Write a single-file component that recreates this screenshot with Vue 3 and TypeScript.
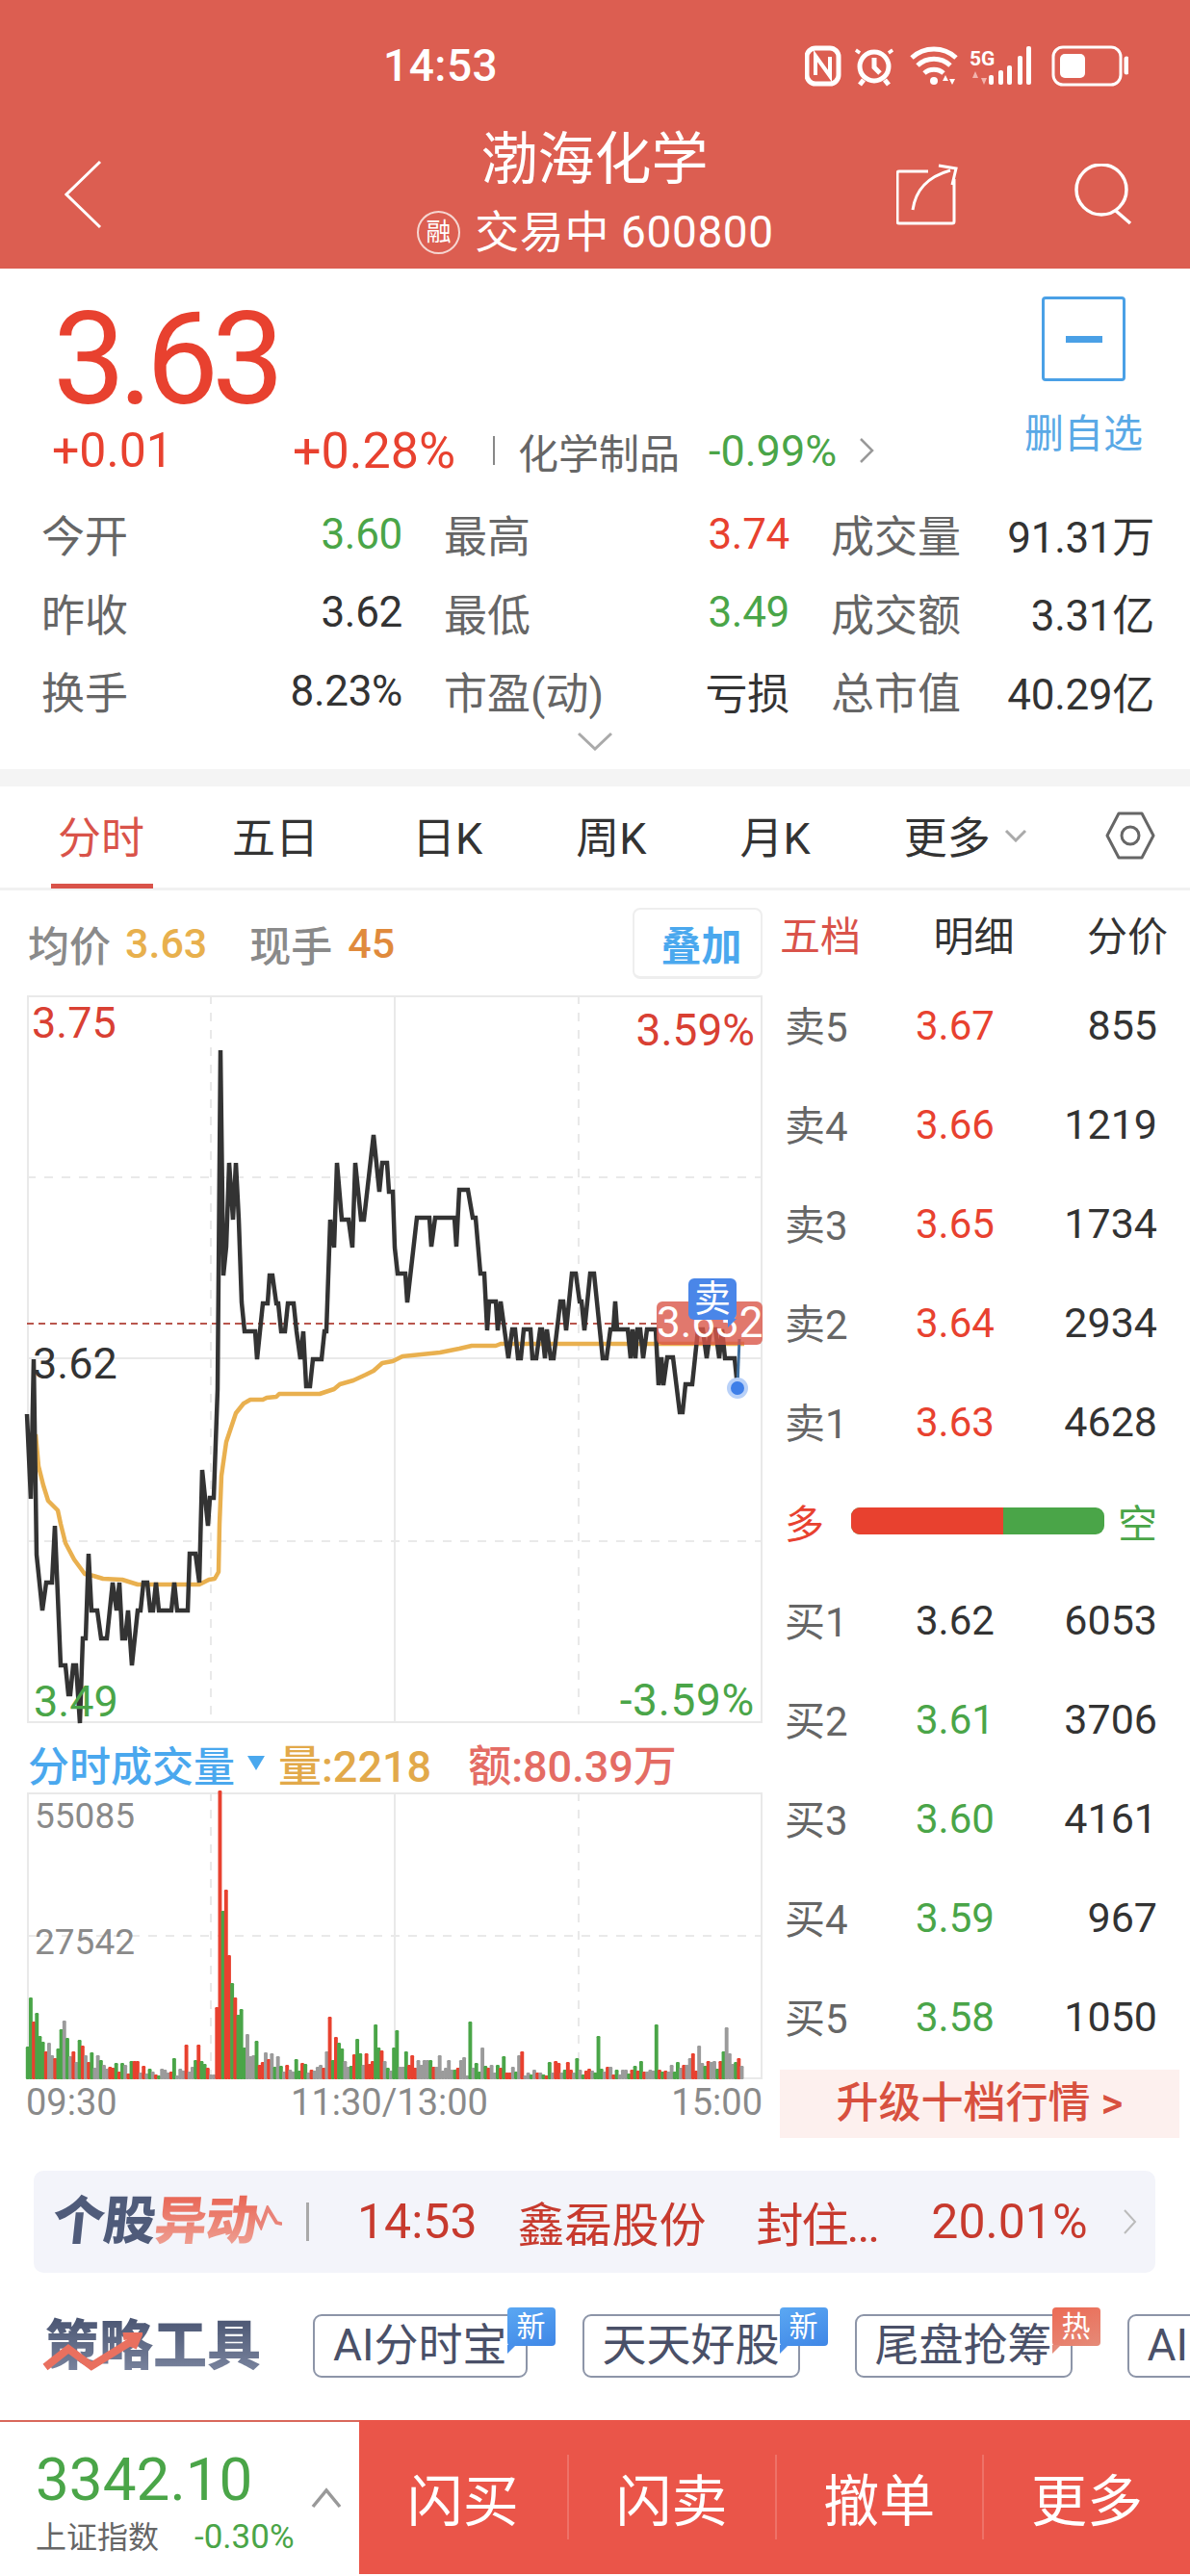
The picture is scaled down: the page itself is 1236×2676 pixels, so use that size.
<script setup lang="ts">
interface BookRow {
  label: string;
  price: string;
  qty: string;
  tone: 'up' | 'down' | 'flat';
}

const stats = [
  { label: '今开', value: '3.60', tone: 'down' },
  { label: '最高', value: '3.74', tone: 'up' },
  { label: '成交量', value: '91.31万', tone: 'flat' },
  { label: '昨收', value: '3.62', tone: 'flat' },
  { label: '最低', value: '3.49', tone: 'down' },
  { label: '成交额', value: '3.31亿', tone: 'flat' },
  { label: '换手', value: '8.23%', tone: 'flat' },
  { label: '市盈(动)', value: '亏损', tone: 'flat' },
  { label: '总市值', value: '40.29亿', tone: 'flat' },
];

const tabs = ['五日', '日K', '周K', '月K'];

const sells: BookRow[] = [
  { label: '卖5', price: '3.67', qty: '855', tone: 'up' },
  { label: '卖4', price: '3.66', qty: '1219', tone: 'up' },
  { label: '卖3', price: '3.65', qty: '1734', tone: 'up' },
  { label: '卖2', price: '3.64', qty: '2934', tone: 'up' },
  { label: '卖1', price: '3.63', qty: '4628', tone: 'up' },
];

const buys: BookRow[] = [
  { label: '买1', price: '3.62', qty: '6053', tone: 'flat' },
  { label: '买2', price: '3.61', qty: '3706', tone: 'down' },
  { label: '买3', price: '3.60', qty: '4161', tone: 'down' },
  { label: '买4', price: '3.59', qty: '967', tone: 'down' },
  { label: '买5', price: '3.58', qty: '1050', tone: 'down' },
];

const chips = [
  { text: 'AI分时宝', badge: '新', hot: false },
  { text: '天天好股', badge: '新', hot: false },
  { text: '尾盘抢筹', badge: '热', hot: true },
  { text: 'AI', badge: '', hot: false },
];

const actions = ['闪买', '闪卖', '撤单', '更多'];

const pricePoints =
  '28,1471 32,1559 35,1414 38,1617 44,1675 48,1646 54,1646 57,1587 63,1732 68,1732 71,1762 73,1762 76,1732 79,1732 83,1792 86,1704 89,1704 92,1616 95,1675 101,1675 105,1704 111,1704 117,1646 121,1675 124,1646 127,1704 130,1704 133,1675 137,1732 143,1675 146,1675 149,1646 153,1646 156,1675 159,1675 162,1646 165,1675 178,1675 181,1646 184,1675 195,1675 197,1616 203,1616 207,1646 210,1529 216,1587 218,1558 222,1558 226,1445 229,1093 232,1327 235,1297 238,1210 242,1269 245,1210 248,1269 251,1355 254,1385 265,1385 267,1414 273,1356 278,1356 280,1327 283,1327 287,1356 289,1356 292,1385 296,1385 299,1356 305,1356 308,1385 312,1414 315,1385 318,1442 322,1442 325,1414 334,1414 337,1385 339,1385 343,1269 347,1298 350,1210 355,1269 362,1269 366,1298 369,1210 375,1269 378,1269 388,1181 394,1240 397,1210 402,1210 404,1240 408,1240 410,1298 413,1325 421,1325 423,1355 433,1267 446,1267 448,1297 452,1267 472,1267 474,1297 477,1238 486,1238 491,1267 494,1267 499,1325 503,1325 506,1384 508,1354 515,1354 517,1384 520,1354 528,1413 532,1383 535,1383 538,1413 541,1413 544,1383 551,1383 553,1413 557,1413 561,1383 563,1383 566,1413 568,1383 572,1413 575,1413 582,1354 585,1354 588,1384 594,1325 598,1325 602,1354 604,1354 607,1384 613,1325 617,1325 626,1413 630,1413 634,1383 637,1383 639,1354 641,1383 652,1383 655,1413 657,1383 660,1413 662,1383 665,1383 668,1413 672,1383 681,1383 684,1441 687,1412 689,1441 693,1412 699,1412 706,1469 709,1469 712,1440 719,1440 725,1383 730,1383 734,1413 738,1383 743,1383 747,1413 750,1383 753,1413 763,1413 766,1443';

const avgPoints =
  '37,1492 40,1525 45,1545 50,1561 60,1571 63,1585 68,1605 77,1622 88,1637 97,1639 107,1642 127,1643 143,1648 207,1648 217,1643 223,1642 227,1635 228,1585 230,1535 235,1500 245,1470 253,1460 260,1456 273,1456 277,1454 287,1453 290,1450 332,1450 347,1445 353,1440 367,1436 380,1430 388,1426 397,1418 408,1416 418,1411 457,1407 477,1403 490,1400 515,1400 520,1398 773,1398';

const volRaw =
  'g34 g85 r60 g69 g45 g39 r29 a38 a25 r22 g32 g52 a61 g43 a24 r29 a18 g41 r35 a25 r18 g28 a12 a25 g20 a15 a11 r13 r12 g17 r8 g17 a15 r6 g19 r19 r19 a7 r14 a6 g11 a8 r5 g4 a11 a10 a7 r8 g22 a4 a11 a9 r36 a8 a13 g20 r36 g19 g16 r12 a5 a5 r75 r300 g175 r197 r129 g100 r85 g67 g73 g33 a47 a24 a25 g40 r15 r18 a28 r21 ' +
  'a27 g13 a24 g14 a8 r15 a10 a8 g21 g9 r17 g16 a7 r10 a9 a13 a15 r12 a29 r65 g20 r44 g38 g32 a19 a13 g14 r26 g42 g27 a15 r27 r16 r19 g57 g33 r30 a19 g12 a9 g33 g51 a13 a13 g29 r15 r25 r12 a20 a15 a20 a20 g20 r13 a13 a25 a9 a12 a20 a10 g10 r12 a20 a23 a4 g60 a12 g17 g8 a33 g14 r12 a15 a7 g15 r12 g24 r7 r7 ' +
  'a13 g8 a25 r29 a4 a7 g5 a10 r7 a7 g5 r4 g18 a7 r19 r17 a7 g10 r18 r10 a7 g22 a10 g5 r9 r11 a9 g7 g45 g11 a8 r13 a13 r5 g10 a5 a10 a10 g6 r10 g14 r9 g19 r8 a8 a10 a9 g57 r10 g8 r9 a8 a15 g8 g18 a12 r15 a15 a22 r27 r9 a35 a17 g14 r19 a18 a19 g11 r19 g29 a54 a27 a16 g18 r22 a14';

const volColor: Record<string, string> = { r: '#e8412f', g: '#4aa548', a: '#9b9b9b' };

const volBars = volRaw.split(' ').map((item, i) => ({
  x: 26.8 + 3.17 * i,
  h: Number(item.slice(1)),
  fill: volColor[item[0]],
}));
</script>

<template>
  <div class="page">
    <header class="head">
      <div class="status">
        <span class="status__time">14:53</span>
        <svg class="status__icons" width="336" height="44" viewBox="836 46 336 44">
          <g fill="none" stroke="#fff" stroke-width="5">
            <rect x="838" y="50" width="33" height="37" rx="9" />
            <path d="M847 78V58l15 21V59" stroke-width="4" />
            <circle cx="908" cy="69" r="15" />
            <path d="M908 60v10l6 6M892 52l-2 3M924 52l2 3M897 83l-4 5M919 83l4 5" />
            <path d="M947 60a34 34 0 0 1 46 0M953 68a25 25 0 0 1 34 0M960 76a15 15 0 0 1 20 0" />
            <rect x="1094" y="49" width="70" height="39" rx="10" stroke-width="3" />
            <path d="M1170 61v14" stroke-linecap="round" />
          </g>
          <circle cx="970" cy="84" r="4" fill="#fff" />
          <path d="M982 78l-3 6h6zM989 88l-3-6h6z" fill="#fff" />
          <text x="1007" y="68" class="status__net">5G</text>
          <path d="M1013 74l-3 7h6zM1022 88l-3-7h6z" fill="#f2b4ad" />
          <g fill="#fff">
            <rect x="1027" y="78" width="5" height="10" rx="2" />
            <rect x="1037" y="73" width="5" height="15" rx="2" />
            <rect x="1046" y="68" width="5" height="20" rx="2" />
            <rect x="1057" y="58" width="5" height="30" rx="2" />
            <rect x="1066" y="48" width="5" height="40" rx="2" />
            <rect x="1101" y="56" width="26" height="25" rx="5" />
          </g>
        </svg>
      </div>
      <div class="nav">
        <svg class="nav__back" width="39" height="74" viewBox="67 165 39 74" fill="none" stroke="#fff" stroke-width="3">
          <path d="M104 168L69 202l35 34" />
        </svg>
        <div class="nav__title">
          <div class="nav__name">渤海化学</div>
          <div class="nav__sub"><span class="nav__seal">融</span>交易中 600800</div>
        </div>
        <div class="nav__actions">
          <svg width="64" height="64" viewBox="933 170 64 64" fill="none" stroke="#fff" stroke-width="3">
            <path d="M966 178h-30a2 2 0 0 0-2 2v50a2 2 0 0 0 2 2h55a2 2 0 0 0 2-2v-44" />
            <path d="M950 218c3-20 14-34 39-41M977 172l18 3-4 17" />
          </svg>
          <svg width="62" height="64" viewBox="1116 170 62 64" fill="none" stroke="#fff" stroke-width="3.5">
            <circle cx="1146" cy="197" r="26" />
            <path d="M1161 219l15 13" />
          </svg>
        </div>
      </div>
    </header>

    <section class="quote">
      <div class="quote__main">
        <div class="quote__price">3.63</div>
        <div class="quote__change">
          <span class="quote__delta">+0.01</span>
          <span class="quote__pct">+0.28%</span>
          <span class="quote__bar"></span>
          <span class="quote__sector">化学制品</span>
          <span class="quote__sector-pct">-0.99%</span>
          <svg width="16" height="28" viewBox="0 0 16 28" fill="none" stroke="#999" stroke-width="2.5">
            <path d="M2 2l12 12L2 26" />
          </svg>
        </div>
      </div>
      <div class="quote__fav">
        <div class="quote__fav-box"><i></i></div>
        <div class="quote__fav-text">删自选</div>
      </div>
    </section>

    <section class="stats">
      <div v-for="s in stats" :key="s.label" class="stats__cell">
        <span class="stats__label">{{ s.label }}</span>
        <span :class="['stats__value', `tone-${s.tone}`]">{{ s.value }}</span>
      </div>
    </section>
    <div class="expand">
      <svg width="36" height="20" viewBox="0 0 36 20" fill="none" stroke="#aaa" stroke-width="3">
        <path d="M1 2l17 16L35 2" />
      </svg>
    </div>

    <div class="band"></div>

    <nav class="tabs">
      <div class="tabs__active">分时</div>
      <div v-for="t in tabs" :key="t" class="tabs__item">{{ t }}</div>
      <div class="tabs__item tabs__more">
        更多
        <svg width="24" height="14" viewBox="0 0 24 14" fill="none" stroke="#aaa" stroke-width="3">
          <path d="M2 2l10 10L22 2" />
        </svg>
      </div>
      <svg class="tabs__gear" width="52" height="50" viewBox="0 0 52 50" fill="none" stroke="#666" stroke-width="3">
        <path d="M14 2h24l12 23-12 23H14L2 25z" stroke-linejoin="round" />
        <circle cx="26" cy="25" r="9" />
      </svg>
    </nav>

    <main class="main">
      <div class="left">
        <div class="info">
          <span class="info__label">均价</span>
          <span class="info__avg">3.63</span>
          <span class="info__label info__label--now">现手</span>
          <span class="info__now">45</span>
          <button class="info__btn">叠加</button>
        </div>

        <div class="chart">
          <svg class="chart__svg" width="764" height="756" viewBox="28 1036 764 756">
            <g fill="none" stroke="#e9e9e9" stroke-width="2">
              <rect x="29" y="1037" width="762" height="754" />
              <path d="M410 1036v756M28 1413h764" />
              <path d="M28 1225h764M28 1603h764M219 1036v756M601 1036v756" stroke-dasharray="9 9" />
            </g>
            <path d="M28 1377h654" fill="none" stroke="#b9564d" stroke-width="2" stroke-dasharray="7 5" />
            <polyline :points="avgPoints" fill="none" stroke="#e9b04f" stroke-width="4.5" stroke-linejoin="round" />
            <polyline :points="pricePoints" fill="none" stroke="#333" stroke-width="4.5" stroke-linejoin="miter" />
            <path d="M766 1443l2-50" stroke="#3f6f9f" stroke-width="3" />
            <circle cx="766" cy="1444" r="11" fill="#b9d1f8" />
            <circle cx="766" cy="1444" r="7" fill="#3f7fe8" />
          </svg>
          <span class="chart__tag chart__tag--hi">3.75</span>
          <span class="chart__tag chart__tag--hi-pct">3.59%</span>
          <span class="chart__tag chart__tag--mid">3.62</span>
          <span class="chart__tag chart__tag--lo">3.49</span>
          <span class="chart__tag chart__tag--lo-pct">-3.59%</span>
          <div class="chart__last">3.632</div>
          <div class="chart__sell">卖</div>
        </div>

        <div class="vol-head">
          <span class="vol-head__name">分时成交量</span>
          <i class="vol-head__arrow"></i>
          <span class="vol-head__qty">量:2218</span>
          <span class="vol-head__amt">额:80.39万</span>
        </div>

        <div class="vol">
          <svg class="vol__svg" width="764" height="298" viewBox="28 1864 764 298">
            <g fill="none" stroke="#e9e9e9" stroke-width="2">
              <rect x="29" y="1865" width="762" height="296" />
              <path d="M410 1864v298" />
              <path d="M28 2013h764M219 1864v298M601 1864v298" stroke-dasharray="9 9" />
            </g>
            <rect
              v-for="(b, i) in volBars"
              :key="i"
              :x="b.x"
              :y="2162 - b.h"
              width="3.9"
              :height="b.h"
              rx="1.2"
              :fill="b.fill"
            />
          </svg>
          <span class="vol__tag vol__tag--top">55085</span>
          <span class="vol__tag vol__tag--mid">27542</span>
        </div>

        <div class="times">
          <span>09:30</span>
          <span class="times__mid">11:30/13:00</span>
          <span>15:00</span>
        </div>
      </div>

      <aside class="book">
        <div class="book__tabs">
          <span class="book__tab--on">五档</span>
          <span>明细</span>
          <span>分价</span>
        </div>
        <div v-for="r in sells" :key="r.label" class="book__row">
          <span class="book__label">{{ r.label }}</span>
          <span :class="`tone-${r.tone}`">{{ r.price }}</span>
          <span class="book__qty">{{ r.qty }}</span>
        </div>
        <div class="book__ratio">
          <span class="tone-up">多</span>
          <div class="book__bar"><i></i></div>
          <span class="tone-down book__short">空</span>
        </div>
        <div v-for="r in buys" :key="r.label" class="book__row">
          <span class="book__label">{{ r.label }}</span>
          <span :class="`tone-${r.tone}`">{{ r.price }}</span>
          <span class="book__qty">{{ r.qty }}</span>
        </div>
        <div class="book__upgrade">升级十档行情 &gt;</div>
      </aside>
    </main>

    <section class="alert">
      <div class="alert__logo"><b>个股</b><em>异动</em></div>
      <svg class="alert__wave" width="30" height="26" viewBox="0 0 26 26" fill="none" stroke="#e98378" stroke-width="3.5" stroke-linecap="round" preserveAspectRatio="none">
        <path d="M1 8l6 14L13 3l8 15 4 1" />
      </svg>
      <span class="alert__sep"></span>
      <span class="alert__time">14:53</span>
      <span class="alert__name">鑫磊股份</span>
      <span class="alert__event">封住...</span>
      <span class="alert__pct">20.01%</span>
      <svg class="alert__more" width="15" height="26" viewBox="0 0 15 26" fill="none" stroke="#bbb" stroke-width="2">
        <path d="M2 1l11 12L2 25" />
      </svg>
    </section>

    <section class="tools">
      <div class="tools__logo">
        策略工具
        <svg class="tools__arrow" width="104" height="44" viewBox="44 2428 104 44" fill="none" stroke="#e9705f" stroke-width="8">
          <path d="M47 2464l24-19 24 18 45-28" />
          <path d="M128 2432l16-2-6 14" />
        </svg>
      </div>
      <div class="tools__chips">
        <div v-for="c in chips" :key="c.text" class="chip">
          {{ c.text }}
          <span v-if="c.badge" :class="['chip__badge', { 'chip__badge--hot': c.hot }]">{{ c.badge }}</span>
        </div>
      </div>
    </section>

    <footer class="foot">
      <div class="index">
        <div>
          <div class="index__value">3342.10</div>
          <div class="index__sub"><span>上证指数</span><span class="index__pct">-0.30%</span></div>
        </div>
        <svg class="index__up" width="32" height="22" viewBox="0 0 32 22" fill="none" stroke="#999" stroke-width="3.5">
          <path d="M2 20L16 3l14 17" />
        </svg>
      </div>
      <div class="trade">
        <div v-for="a in actions" :key="a" class="trade__btn"><span>{{ a }}</span></div>
      </div>
    </footer>
  </div>
</template>

<style scoped>
.page {
  width: 1236px;
  height: 2676px;
  overflow: hidden;
  background: #fff;
  color: #333;
  font-family: Roboto, "Noto Sans CJK SC", sans-serif;
}

.tone-up { color: #e8412f; }
.tone-down { color: #4aa548; }
.tone-flat { color: #333; }

.head {
  height: 279px;
  background: #dc5e51;
  color: #fff;
}

.status {
  height: 122px;
  padding: 46px 64px 0 398px;
  box-sizing: border-box;
  display: flex;
  justify-content: space-between;
  align-items: flex-start;
}

.status__time {
  font-size: 46px;
  line-height: 44px;
  font-weight: 500;
  letter-spacing: 0.5px;
}

.status__net {
  font-size: 21px;
  font-weight: 700;
  fill: #fff;
  font-family: Roboto, sans-serif;
}

.nav {
  display: grid;
  grid-template-columns: 1fr auto 1fr;
  align-items: start;
  padding: 0 60px 0 67px;
}

.nav__back { margin-top: 43px; }

.nav__title { text-align: center; }

.nav__name {
  font-size: 59px;
  line-height: 70px;
  margin-top: 9px;
  margin-right: 8px;
}

.nav__sub {
  display: flex;
  align-items: center;
  justify-content: center;
  font-size: 46px;
  letter-spacing: 0.6px;
  line-height: 60px;
  margin-top: 10px;
  padding-right: 6px;
}

.nav__seal {
  width: 41px;
  height: 41px;
  border: 2px solid #f6d5d0;
  border-radius: 50%;
  font-size: 26px;
  line-height: 41px;
  text-align: center;
  margin-right: 15px;
}

.nav__actions {
  display: flex;
  justify-content: flex-end;
  gap: 119px;
  margin-top: 48px;
}

.quote {
  height: 232px;
  display: flex;
  justify-content: space-between;
  padding: 0 49px 0 54px;
}

.quote__main { flex: 1; }

.quote__price {
  font-size: 134px;
  line-height: 134px;
  margin-top: 28px;
  margin-left: 1px;
  letter-spacing: -7px;
  color: #e8412f;
  font-weight: 400;
}

.quote__change {
  display: flex;
  align-items: center;
  height: 56px;
  margin-top: -1px;
}

.quote__delta { font-size: 50px; width: 250px; color: #e8412f; }
.quote__pct { font-size: 52px; color: #e8412f; width: 208px; }

.quote__bar {
  width: 2px;
  height: 30px;
  background: #888;
  margin-right: 24px;
}

.quote__sector { font-size: 42px; color: #666; width: 198px; }
.quote__sector-pct { font-size: 45px; color: #4aa548; width: 156px; }

.quote__fav {
  display: flex;
  flex-direction: column;
  align-items: center;
  padding-top: 29px;
}

.quote__fav-box {
  width: 87px;
  height: 88px;
  box-sizing: border-box;
  border: 3px solid #4aa0e6;
  border-radius: 4px;
  display: grid;
  place-items: center;
}

.quote__fav-box i {
  display: block;
  width: 38px;
  height: 7px;
  background: #4aa0e6;
}

.quote__fav-text {
  font-size: 41px;
  line-height: 50px;
  margin-top: 30px;
  color: #5aa9e6;
}

.stats {
  display: grid;
  grid-template-columns: 375px 359px 336px;
  column-gap: 43px;
  padding-left: 43px;
  margin-top: 3px;
}

.stats__cell {
  height: 81.5px;
  display: flex;
  align-items: center;
  justify-content: space-between;
  font-size: 44px;
}

.stats__label { color: #666; font-size: 45px; }
.stats__value { letter-spacing: -0.3px; }

.expand {
  display: flex;
  justify-content: center;
  height: 39px;
  margin-top: 1px;
}

.band {
  height: 18px;
  background: #f4f4f4;
}

.tabs {
  height: 108px;
  box-sizing: border-box;
  padding: 0 36px 3px 60px;
  border-bottom: 3px solid #f1f1f1;
  display: flex;
  align-items: center;
  font-size: 45px;
  color: #333;
  position: relative;
}

.tabs__active {
  color: #d9534a;
  position: relative;
  margin-right: 91px;
}

.tabs__active::after {
  content: "";
  position: absolute;
  left: -7px;
  right: -9px;
  bottom: -23px;
  height: 5px;
  background: #d9534a;
}

.tabs__item { margin-right: 97px; }

.tabs__more {
  display: flex;
  align-items: center;
  gap: 14px;
  margin-right: 0;
}

.tabs__gear { margin-left: auto; }

.main {
  display: grid;
  grid-template-columns: 800px 436px;
  height: 1296px;
}

.info {
  height: 109px;
  padding: 18px 8px 17px 29px;
  box-sizing: border-box;
  display: flex;
  align-items: center;
  font-size: 43px;
  font-weight: 500;
}

.info__label { color: #8a8a8a; }
.info__label--now { margin-left: 44px; }
.info__avg { color: #e8b04d; margin-left: 15px; }
.info__now { color: #e08a3c; margin-left: 16px; }

.info__btn {
  margin-left: auto;
  width: 135px;
  height: 74px;
  box-sizing: border-box;
  padding: 0 0 0 8px;
  background: #fff;
  border: 2px solid #eee;
  border-bottom-width: 3px;
  border-radius: 8px;
  color: #4aa8ee;
  font: inherit;
  font-weight: 700;
  font-size: 42px;
}

.chart {
  position: relative;
  margin-left: 28px;
  width: 764px;
  height: 756px;
}

.chart__svg,
.vol__svg {
  display: block;
  overflow: visible;
}

.chart__tag {
  position: absolute;
  font-size: 45px;
  line-height: 44px;
}

.chart__tag--hi { left: 5px; top: 7px; color: #d94033; }
.chart__tag--hi-pct { right: 8px; top: 14px; color: #d94033; font-size: 46px; }
.chart__tag--mid { left: 6px; top: 361px; color: #333; }
.chart__tag--lo { left: 7px; top: 712px; color: #4aa548; }
.chart__tag--lo-pct { right: 8px; top: 710px; color: #4aa548; font-size: 46px; letter-spacing: 0.7px; }

.chart__last {
  position: absolute;
  left: 654px;
  top: 318px;
  width: 110px;
  height: 45px;
  border-radius: 6px;
  background: rgba(217, 86, 72, 0.8);
  color: #fff;
  font-size: 44px;
  line-height: 45px;
  text-align: center;
}

.chart__sell {
  position: absolute;
  left: 687px;
  top: 294px;
  width: 50px;
  height: 43px;
  border-radius: 6px;
  background: #4a86e8;
  color: #fff;
  font-size: 38px;
  line-height: 43px;
  text-align: center;
}

.chart__sell::after {
  content: "";
  position: absolute;
  right: 0;
  top: 42px;
  border-style: solid;
  border-width: 0 0 9px 9px;
  border-color: transparent transparent transparent #4a86e8;
}

.vol-head {
  height: 72px;
  display: flex;
  align-items: center;
  padding: 12px 0 0 29px;
  box-sizing: border-box;
  font-size: 43px;
}

.vol-head__name { color: #4aa8ee; font-weight: 500; }

.vol-head__arrow {
  margin-left: 13px;
  border-style: solid;
  border-width: 15px 9px 0;
  border-color: #4aa8ee transparent transparent;
}

.vol-head__qty { color: #e2a94a; margin-left: 14px; font-weight: 500; font-size: 45px; }
.vol-head__amt { color: #e46c64; margin-left: 38px; font-weight: 500; font-size: 45px; }

.vol {
  position: relative;
  margin-left: 28px;
  width: 764px;
  height: 298px;
}

.vol__tag {
  position: absolute;
  left: 8px;
  font-size: 37px;
  line-height: 40px;
  color: #8a8a8a;
}

.vol__tag--top { top: 5px; }
.vol__tag--mid { top: 136px; }

.times {
  margin: 3px 8px 0 27px;
  display: flex;
  justify-content: space-between;
  font-size: 38px;
  line-height: 42px;
  color: #8a8a8a;
}

.times__mid { margin-right: 10px; }

.book {
  font-size: 42px;
}

.book__tabs {
  height: 89px;
  display: flex;
  justify-content: space-between;
  align-items: center;
  padding: 0 23px 0 10px;
  box-sizing: border-box;
  color: #333;
}

.book__tab--on { color: #d9534a; }

.book__row {
  height: 103px;
  display: grid;
  grid-template-columns: 136px 82px 1fr;
  align-items: center;
  padding: 0 34px 0 15px;
}

.book__label { color: #666; margin-top: -3px; }
.book__qty { text-align: right; color: #333; font-size: 43px; }

.book__ratio {
  height: 103px;
  display: flex;
  align-items: center;
  padding: 0 34px 0 15px;
  font-size: 41px;
}

.book__bar {
  width: 263px;
  height: 28px;
  margin-left: 28px;
  border-radius: 9px;
  background: #4aa548;
  overflow: hidden;
}

.book__bar i {
  display: block;
  width: 60%;
  height: 100%;
  background: #e8412f;
}

.book__short { margin-left: auto; }

.book__upgrade {
  height: 71px;
  margin: 3px 11px 0 10px;
  background: #fdf0ee;
  color: #d8503f;
  font-size: 44px;
  font-weight: 500;
  line-height: 71px;
  text-align: center;
}

.alert {
  position: relative;
  height: 106px;
  margin: 34px 36px 0 35px;
  background: #f3f4fa;
  border-radius: 10px;
  display: flex;
  align-items: center;
  color: #c73a2e;
  font-size: 49px;
  white-space: nowrap;
}

.alert__logo {
  margin-left: 20px;
  font-size: 54px;
  line-height: 56px;
  font-weight: 900;
  letter-spacing: -1px;
  transform: skewX(-6deg);
}

.alert__logo b {
  color: #4f5b7a;
}

.alert__logo em {
  font-style: normal;
  background: linear-gradient(#e8604f, #efa69a);
  -webkit-background-clip: text;
  background-clip: text;
  color: transparent;
}

.alert__wave { margin-left: -4px; margin-top: -8px; }

.alert__sep {
  width: 3px;
  height: 40px;
  background: #a9a9a9;
  margin-left: 25px;
}

.alert__time { margin-left: 50px; font-size: 50px; }
.alert__name { margin-left: 42px; }
.alert__event { margin-left: 52px; letter-spacing: -2px; }
.alert__pct { margin-left: 55px; font-size: 50px; }
.alert__more { position: absolute; right: 19px; top: 40px; }

.tools {
  display: flex;
  align-items: center;
  height: 153px;
  overflow: hidden;
}

.tools__logo {
  position: relative;
  flex-shrink: 0;
  margin-left: 47px;
  font-size: 56px;
  font-weight: 900;
  line-height: 60px;
  white-space: nowrap;
  color: transparent;
  background: linear-gradient(#4a5572, #7c86a0);
  -webkit-background-clip: text;
  background-clip: text;
}

.tools__arrow {
  position: absolute;
  left: -3px;
  top: 16px;
}

.tools__chips {
  display: flex;
  gap: 57px;
  margin-left: 54px;
}

.chip {
  position: relative;
  flex-shrink: 0;
  height: 66px;
  box-sizing: border-box;
  padding: 0 19px;
  border: 2.5px solid #8d95a8;
  border-radius: 9px;
  color: #4a5068;
  font-size: 46px;
  line-height: 60px;
  white-space: nowrap;
}

.chip:last-child { width: 220px; }

.chip__badge {
  position: absolute;
  right: -31px;
  top: -9px;
  width: 50px;
  height: 40px;
  border-radius: 4px;
  background: linear-gradient(160deg, #5ba8f3, #3f86e6);
  color: #fff;
  font-size: 30px;
  line-height: 40px;
  text-align: center;
}

.chip__badge::after {
  content: "";
  position: absolute;
  left: 0;
  top: 39px;
  border-style: solid;
  border-width: 9px 9px 0 0;
  border-color: #4a90ea transparent transparent transparent;
}

.chip__badge--hot { background: linear-gradient(160deg, #ec6b55, #e58a78); }
.chip__badge--hot::after { border-color: #e58a78 transparent transparent transparent; }

.foot {
  display: flex;
  height: 160px;
}

.index {
  width: 373px;
  box-sizing: border-box;
  border-top: 2px solid #d9685c;
  padding: 28px 18px 0 37px;
  display: flex;
  justify-content: space-between;
  align-items: flex-start;
}

.index__value {
  font-size: 62px;
  line-height: 64px;
  color: #4aa548;
}

.index__sub {
  display: flex;
  align-items: center;
  gap: 37px;
  margin-top: 6px;
  font-size: 32px;
  line-height: 44px;
  color: #666;
}

.index__pct { font-size: 35px; color: #4aa548; }
.index__up { margin-top: 40px; }

.trade {
  flex: 1;
  background: #ea5549;
  display: grid;
  grid-template-columns: repeat(4, 1fr);
  align-items: center;
  color: #fff;
  font-size: 58px;
}

.trade__btn {
  height: 88px;
  display: flex;
  align-items: center;
  justify-content: center;
  border-left: 2px solid #ee7268;
}

.trade__btn:first-child { border-left: 0; }
</style>

<style>
html, body { margin: 0; background: #fff; }
</style>
